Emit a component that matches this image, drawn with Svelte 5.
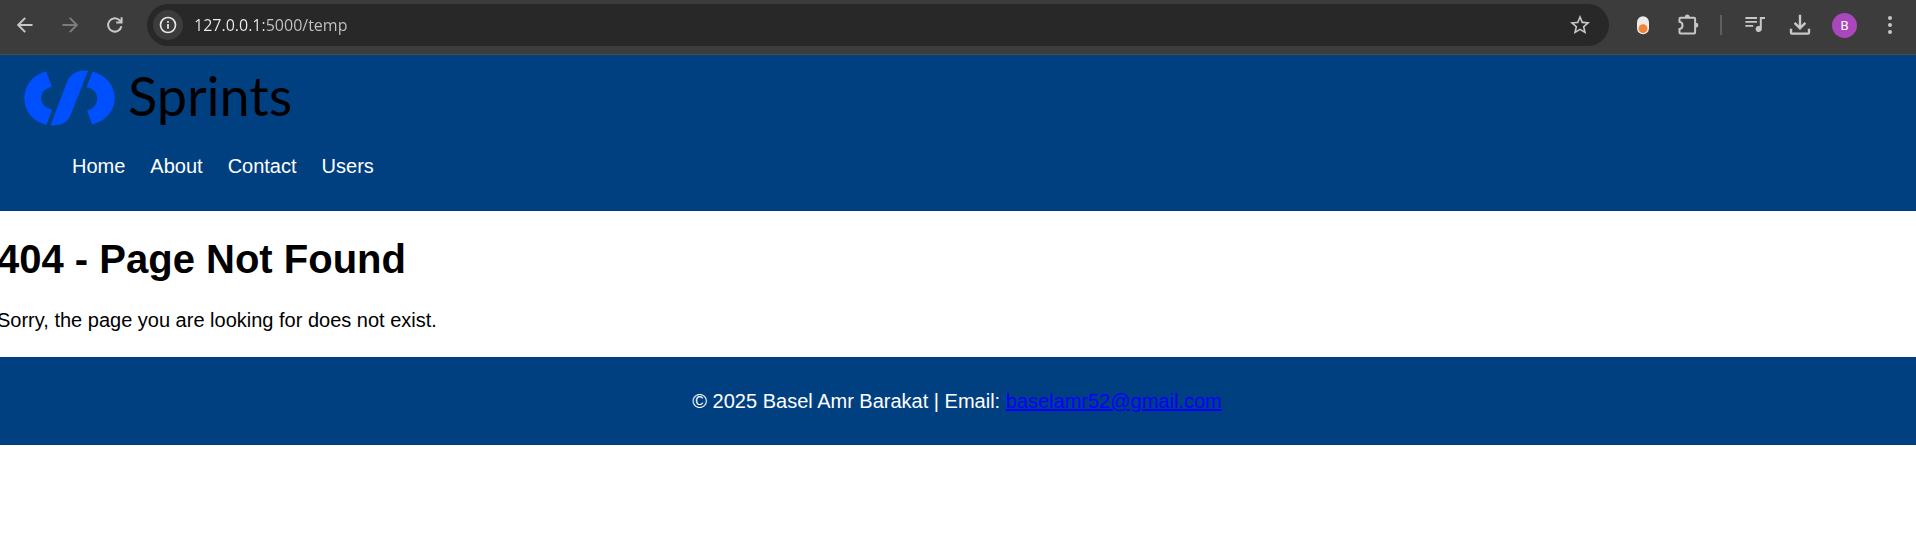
<script>
  let address = $state('127.0.0.1:5000/temp');
  const links = ['Home', 'About', 'Contact', 'Users'];
</script>

<div class="toolbar">
  <button class="tool" aria-label="Back">
    <svg viewBox="0 0 24 24"><path class="line" d="M19.5 12H5.5M12.2 4.9L5.2 12l7 7.1" /></svg>
  </button>
  <button class="tool dim" aria-label="Forward">
    <svg viewBox="0 0 24 24"><path class="line" d="M4.5 12h14M11.8 4.9l7 7.1l-7 7.1" /></svg>
  </button>
  <button class="tool" aria-label="Reload">
    <svg viewBox="0 0 24 24"><path class="line" d="M18.4 13.2A6.7 6.7 0 1 1 16.8 7.4L18.2 9M18.6 4.2V9.6H13.2" /></svg>
  </button>

  <div class="address">
    <button class="info" aria-label="Site information">
      <svg viewBox="0 0 24 24"><circle class="line thin" cx="12" cy="12" r="7.5" /><path d="M11.1 11h1.8v4.8h-1.8zM11.1 8h1.8v1.8h-1.8z" /></svg>
    </button>
    <input aria-label="Address" type="text" spellcheck="false" bind:value={address} />
    <button class="tool" aria-label="Bookmark">
      <svg viewBox="0 0 24 24"><path d="M22 9.24l-7.19-.62L12 2 9.19 8.63 2 9.24l5.46 4.73L5.82 21 12 17.27 18.18 21l-1.63-7.03L22 9.24zM12 15.4l-3.76 2.27 1-4.28-3.32-2.88 4.38-.38L12 6.1l1.71 4.04 4.38.38-3.32 2.88 1 4.28L12 15.4z" /></svg>
    </button>
  </div>

  <button class="tool" aria-label="Recorder">
    <svg viewBox="0 0 24 24"><rect x="6" y="3.2" width="12" height="18" rx="6" fill="#ebebeb" /><circle cx="12" cy="15.6" r="4.4" fill="#f58232" /></svg>
  </button>
  <button class="tool" aria-label="Extensions">
    <svg viewBox="0 0 24 24">
      <path class="line" d="M4.5 4.8H18.1a1 1 0 0 1 1 1V19.4a1 1 0 0 1-1 1H4.5a1 1 0 0 1-1-1V16C7.5 15.5 7.5 9.3 3.5 8.8V5.8a1 1 0 0 1 1-1z" />
      <path d="M8.9 4.2a2.4 2.8 0 0 1 4.8 0zM19.7 9.8a2.6 2.4 0 0 1 0 4.8z" />
    </svg>
  </button>
  <span class="divider"></span>
  <button class="tool" aria-label="Media controls">
    <svg viewBox="0 0 24 24"><path d="M22 4h-5.2v9.1a3.1 3.1 0 1 0 2 2.9V6H22zM14 4H2.4v1.9H14zM14 7.9H2.4v1.9H14zM10.2 11.9H2.4v1.9h7.8z" /></svg>
  </button>
  <button class="tool" aria-label="Downloads">
    <svg viewBox="0 0 24 24"><path class="line thick" d="M12 1.8V15M6.6 9.8L12 15.2l5.4-5.4M3 15.8v3.8a1 1 0 0 0 1 1h16a1 1 0 0 0 1-1v-3.8" /></svg>
  </button>
  <button class="tool" aria-label="Profile"><span class="avatar">B</span></button>
  <button class="tool" aria-label="Menu">
    <svg viewBox="0 0 24 24"><circle cx="12" cy="5" r="2" /><circle cx="12" cy="12" r="2" /><circle cx="12" cy="19" r="2" /></svg>
  </button>
</div>

<header>
  <div class="logo">
    <svg viewBox="74 61 271 166" aria-hidden="true">
      <path d="M140 64C100 75 75 106 75 145C75 183 101 215 141 224L158 178C139 175 125 163 125 144C125 126 138 113 157 111Z" />
      <path d="M265 62C233 61 213 70 202 96L153 226C184 227 204 218 214 192Z" />
      <path d="M278 65C318 76 344 106 344 145C344 182 317 213 277 223L262 181C280 178 292 164 292 145C292 128 280 114 260 112Z" />
    </svg>
    <span>Sprints</span>
  </div>
  <nav>
    <ul>
      {#each links as link}
        <li><a href="#{link.toLowerCase()}">{link}</a></li>
      {/each}
    </ul>
  </nav>
</header>

<main>
  <h1>404 - Page Not Found</h1>
  <p>Sorry, the page you are looking for does not exist.</p>
</main>

<footer>
  <p>© 2025 Basel Amr Barakat | Email: <a href="mailto:baselamr52@gmail.com">baselamr52@gmail.com</a></p>
</footer>

<style>
  :global(body) {
    margin: 0;
    background: #fff;
    color: #000;
    font: 20px/23px "Liberation Sans", Arial, sans-serif;
  }

  .toolbar {
    display: flex;
    align-items: center;
    padding: 4px 4px 8px 2px;
    background: #3c3c3c;
    border-bottom: 1px solid #4a4a48;
  }

  button {
    display: flex;
    align-items: center;
    justify-content: center;
    flex: none;
    padding: 0;
    border: 0;
    background: none;
    color: #c7c7c7;
  }

  .tool {
    width: 45px;
    height: 42px;
  }

  .dim {
    color: #7c7c7c;
  }

  svg {
    display: block;
    width: 24px;
    height: 24px;
    fill: currentColor;
  }

  .line {
    fill: none;
    stroke: currentColor;
    stroke-width: 2;
  }

  .thick {
    stroke-width: 2.4;
  }

  .thin {
    stroke-width: 1.7;
  }

  .address {
    display: flex;
    align-items: center;
    flex: 1;
    min-width: 0;
    margin: 0 11px 0 10px;
    padding: 0 7px 0 6px;
    border-radius: 21px;
    background: #282828;
  }

  .info {
    width: 30px;
    height: 30px;
    border-radius: 50%;
    background: #3c3c3c;
    color: #e3e3e3;
  }

  .address input {
    flex: 1;
    min-width: 0;
    height: 30px;
    margin-left: 11px;
    padding: 0;
    border: 0;
    outline: 0;
    /* host is brighter than the port and path */
    background: linear-gradient(90deg, #ececec 70px, #c4c4c4 70px);
    background-clip: text;
    -webkit-text-fill-color: transparent;
    font: 16px/30px "Open Sans", "Noto Sans", sans-serif;
  }

  .divider {
    width: 2px;
    height: 20px;
    margin: 0 10px;
    background: #5f5f5f;
  }

  .avatar {
    width: 25px;
    border-radius: 50%;
    background: #ab47bc;
    color: #fff;
    font: 13px/25px Roboto, sans-serif;
  }

  header {
    padding: 12px 24px;
    background: #004080;
  }

  .logo {
    display: flex;
    align-items: center;
    gap: 13px;
    height: 62px;
    color: #000;
    font: 54px/58px Lato, sans-serif;
  }

  .logo span {
    padding-bottom: 4px;
  }

  .logo svg {
    width: 91px;
    height: 56px;
    fill: #0050ff;
  }

  ul {
    display: flex;
    flex-wrap: wrap;
    gap: 25px;
    margin: 26px 0 21px;
    padding: 0 0 0 48px;
    list-style: none;
  }

  nav a {
    color: #fff;
    text-decoration: none;
  }

  main {
    margin-left: -3px;
  }

  h1 {
    margin: 25px 0 27px;
    font-size: 40px;
    line-height: 46px;
  }

  p {
    margin: 0;
  }

  main p {
    margin-bottom: 25px;
  }

  footer {
    padding: 33px 14px 32px 12px;
    background: #004080;
    color: #fff;
    text-align: center;
  }

  footer a {
    color: #00f;
  }
</style>
